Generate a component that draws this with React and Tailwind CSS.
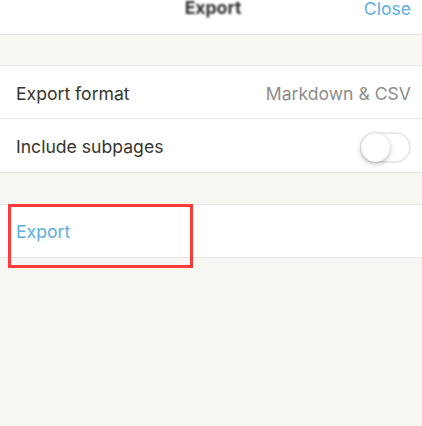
import React from 'react';

// iOS 风格开关（关闭状态）
function Toggle() {
  return (
    <div className="relative w-[51px] h-[31px] rounded-full border-2 border-[#e9e9ea] bg-white">
      <div className="absolute -left-[1px] -top-[1px] w-[29px] h-[29px] rounded-full bg-white shadow-[0_2px_5px_rgba(0,0,0,0.25),0_0_1px_rgba(0,0,0,0.2)]" />
    </div>
  );
}

function Row({ label, children, last }) {
  return (
    <div className={`h-[53px] flex items-center justify-between pl-4 pr-[11px] pt-[4px] ${last ? '' : 'border-b border-[#e5e5e3]'}`}>
      <span className="text-[17.6px] text-[#37352f]">{label}</span>
      {children}
    </div>
  );
}

export default function App() {
  return (
    <div className="w-[422px] h-[426px] bg-[#f7f6f3] overflow-hidden" style={{ fontFamily: 'Inter, "Liberation Sans", sans-serif' }}>
      {/* 顶部栏 */}
      <div className="h-[35px] bg-white border-b border-[#e3e3e1] grid grid-cols-[1fr_auto_1fr] items-start px-[11px]">
        <div />
        <div className="-mt-[4px] pl-[4px] text-[17.6px] font-bold text-[#2f2f2f] blur-[0.8px] leading-[24px]">Export</div>
        <div className="-mt-[3px] text-right text-[17.6px] text-[#5aaee0] leading-[24px]">Close</div>
      </div>

      {/* 设置项 */}
      <div className="mt-[30px] bg-white border-y border-[#e5e5e3]">
        <Row label="Export format">
          <span className="text-[17.6px] text-[#8c8c8a]">Markdown &amp; CSV</span>
        </Row>
        <Row label="Include subpages" last>
          <Toggle />
        </Row>
      </div>

      {/* 导出按钮 */}
      <div className="relative mt-[31px] h-[54px] bg-white border-y border-[#e5e5e3] flex items-center pl-4 pt-[3px]">
        <span className="text-[17.6px] text-[#5aaee0]">Export</span>
        <div className="absolute left-[8px] top-[-1px] w-[185px] h-[64px] border-[3px] border-[#fd3b3b]" />
      </div>
    </div>
  );
}
